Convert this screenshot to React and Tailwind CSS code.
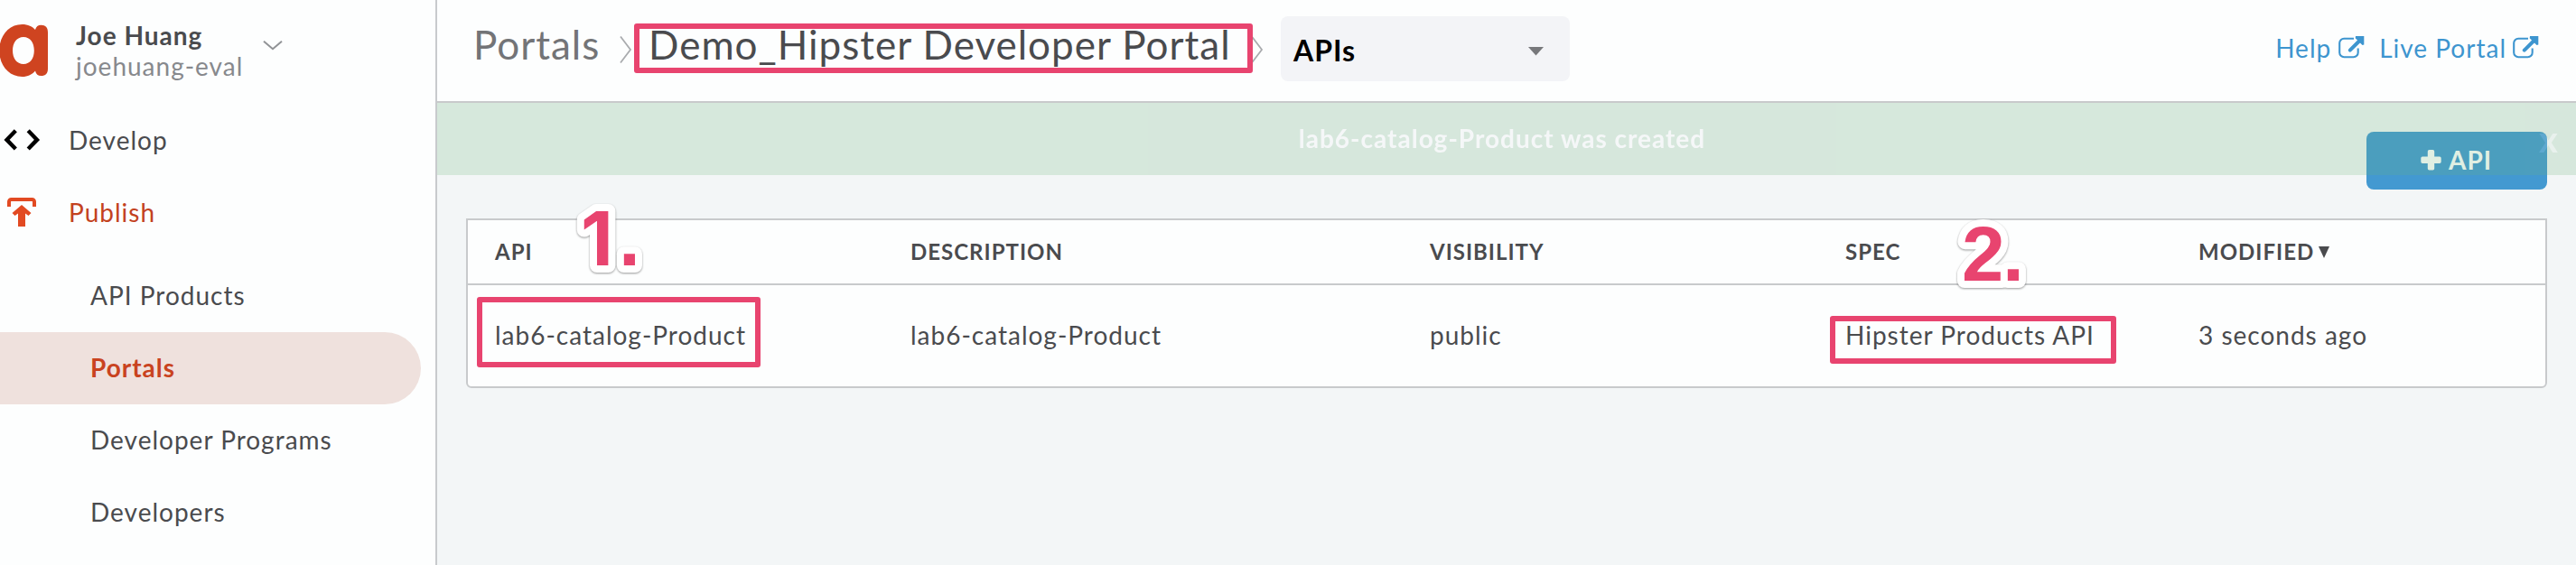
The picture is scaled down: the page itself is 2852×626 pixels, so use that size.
const SUB_ITEMS = ["API Products", "Portals", "Developer Programs", "Developers"];

const COLUMNS = ["API", "DESCRIPTION", "VISIBILITY", "SPEC", "MODIFIED"];
const ROW = ["lab6-catalog-Product", "lab6-catalog-Product", "public", "Hipster Products API", "3 seconds ago"];

function Logo() {
  return (
    <svg width="54" height="60" viewBox="0 0 54 60" className="shrink-0">
      <path
        fill="#cf4420"
        fillRule="evenodd"
        d="M24.500 1C31 1 36 3.500 39 7C40 3.500 42 1.800 45.500 1.800C50.500 1.800 53 4.500 53 10V50C53 55.500 50.500 58 45.500 58C42 58 40 56.300 39 52.500C35.500 56.500 31 59 24.500 59C9.500 59 -0.800 46 -0.800 30C-0.800 14 9.500 1 24.500 1ZM26 15C18.500 15 14 21.500 14 30C14 38.500 18.500 45 26 45C33.500 45 37.800 38.500 37.800 30C37.800 21.500 33.500 15 26 15Z"
      />
    </svg>
  );
}

function CodeIcon() {
  return (
    <svg width="48" height="26" viewBox="0 0 48 26" fill="none" stroke="#000" strokeWidth="4.400" className="shrink-0">
      <path d="M17.300 2.800L7.500 12.900L17.300 23" />
      <path d="M31.200 2.800L41 12.900L31.200 23" />
    </svg>
  );
}

function PublishIcon() {
  return (
    <svg width="48" height="32" viewBox="0 0 48 32" className="shrink-0">
      <path d="M10 10V4.500A2.500 2.500 0 0 1 12.500 2H35.500A2.500 2.500 0 0 1 38 4.500V10" fill="none" stroke="#e24a22" strokeWidth="4" />
      <path d="M24 8L34.500 17L31.500 20L28 17.500V32H20V17.500L16.500 20L13.500 17Z" fill="#e24a22" />
    </svg>
  );
}

function ExternalIcon() {
  return (
    <svg width="29" height="25" viewBox="0 0 29 25" className="shrink-0">
      <path d="M17 2.700H6.500A5 5 0 0 0 1.200 8V18A5 5 0 0 0 6.500 23.200H16.500A5 5 0 0 0 21.700 18V13.500" fill="none" stroke="#3d95cf" strokeWidth="2.100" />
      <path d="M12.800 15.700L23 5.500" stroke="#3d95cf" strokeWidth="4" strokeLinecap="round" />
      <path d="M19 0H28.300V9.600L26.500 10L18.700 2.200Z" fill="#3d95cf" />
    </svg>
  );
}

function Crumb() {
  return (
    <svg width="14" height="32" viewBox="0 0 14 32" fill="none" stroke="#a9abae" strokeWidth="1.800" className="shrink-0">
      <path d="M1 1.500L12 16L1 30.500" />
    </svg>
  );
}

const SANS = "'Liberation Sans', Arial, sans-serif";

function Marker({ digit, font, size, x, dotX }) {
  return (
    <svg width="120" height="126" viewBox="0 0 120 126" className="[filter:drop-shadow(0_1.5px_1px_rgba(0,0,0,0.4))]">
      <text y="94" fontWeight="700" letterSpacing="0" fill="#e8446f" stroke="#fff" strokeWidth="16" strokeLinejoin="round" paintOrder="stroke">
        <tspan x={x} fontFamily={font} fontSize={size}>
          {digit}
        </tspan>
        <tspan x={dotX} fontFamily={SANS} fontSize="86">
          .
        </tspan>
      </text>
    </svg>
  );
}

function Sidebar() {
  return (
    <aside className="flex w-[484px] shrink-0 flex-col border-r-2 border-[#c8cacd] bg-[#fdfefe]">
      <div className="flex h-[115px] items-start">
        <div className="pt-[26px]">
          <Logo />
        </div>
        <div className="w-[237px] whitespace-nowrap pl-[30px] pt-[22px] leading-[34px]">
          <div className="font-bold">Joe Huang</div>
          <div className="text-[#87898d]">joehuang-eval</div>
        </div>
        <svg width="22" height="12" viewBox="0 0 22 12" fill="none" stroke="#919396" strokeWidth="2" className="mt-[44px]">
          <path d="M1 1.800L11 10.300L21 1.800" />
        </svg>
      </div>
      <div className="flex h-20 items-center">
        <CodeIcon />
        <span className="pl-7">Develop</span>
      </div>
      <div className="flex h-20 items-center text-[#c3421f]">
        <PublishIcon />
        <span className="pl-7">Publish</span>
      </div>
      <nav className="mt-[13px]">
        {SUB_ITEMS.map((item) => (
          <div
            key={item}
            className={
              item === "Portals"
                ? "flex h-20 w-[466px] items-center rounded-r-full bg-[#efe1dd] pb-0.5 pl-[100px] font-bold text-[#c9431f]"
                : "flex h-20 items-center pb-0.5 pl-[100px]"
            }
          >
            {item}
          </div>
        ))}
      </nav>
    </aside>
  );
}

function Header() {
  return (
    <header className="flex h-[114px] items-start border-b-2 border-[#c8cacb] bg-[#fdfefe] pl-10 pr-[41px]">
      <div className="w-[162px] pt-[23px] text-[44px] leading-[52px] text-[#737477]">Portals</div>
      <div className="pt-[39px]">
        <Crumb />
      </div>
      <div className="relative w-[685px] pl-[18px] pt-[23px] text-[44px] leading-[52px]">
        Demo_Hipster Developer Portal
        <div className="absolute left-[2px] top-[26px] h-[55px] w-[685px] rounded-[3px] border-[6px] border-[#e8446f]" />
      </div>
      <div className="pt-[39px]">
        <Crumb />
      </div>
      <div className="ml-[19px] mt-[18px] flex h-[72px] w-[320px] items-center justify-between rounded-lg bg-[#f3f4f7] pl-[14px] pr-[29px] pt-[3px] text-[32px] font-bold leading-[39px] text-black">
        APIs
        <svg width="17" height="10" viewBox="0 0 17 10" className="mt-[2px]">
          <path d="M0 0H17L8.500 9.500Z" fill="#77787b" />
        </svg>
      </div>
      <div className="ml-auto flex items-start pt-9 leading-[34px] text-[#3d95cf]">
        <span className="pr-2">Help</span>
        <span className="pt-[4px]">
          <ExternalIcon />
        </span>
        <span className="pl-4 pr-[7px]">Live Portal</span>
        <span className="pt-[4px]">
          <ExternalIcon />
        </span>
      </div>
    </header>
  );
}

function Table() {
  return (
    <div className="relative mt-8 rounded-b-md border-2 border-[#c8cacc] bg-[#fdfefe]">
      <div className="grid h-[72px] grid-cols-[460px_575px_460px_391px_1fr] items-center border-b-2 border-[#c8cacc] pb-px pl-[30px] text-[24px] font-bold leading-[29px]">
        {COLUMNS.map((name) => (
          <div key={name} className="flex items-center">
            {name}
            {name === "MODIFIED" && (
              <svg width="12" height="13" viewBox="0 0 12 13" className="ml-[5px] mt-[2px]">
                <path d="M0 0H12L6 13Z" fill="#4a4b4e" />
              </svg>
            )}
          </div>
        ))}
      </div>
      <div className="grid h-28 grid-cols-[460px_575px_460px_391px_1fr] items-center pb-0.5 pl-[30px] leading-[34px]">
        {ROW.map((value, i) => (
          <div key={i}>{value}</div>
        ))}
      </div>
      <div className="absolute left-[10px] top-[85px] h-[78px] w-[314px] rounded-[3px] border-[6px] border-[#e8446f]" />
      <div className="absolute left-[1508px] top-[106px] h-[53px] w-[317px] rounded-[3px] border-[6px] border-[#e8446f]" />
      <div className="absolute left-[102px] top-[-44px]">
        <Marker digit="1" font="Inter, sans-serif" size="83" x="23" dotX="65" />
      </div>
      <div className="absolute left-[1632px] top-[-27px]">
        <Marker digit="2" font={SANS} size="86" x="22" dotX="67" />
      </div>
    </div>
  );
}

export default function App() {
  return (
    <div className="flex h-[626px] w-[2852px] overflow-hidden bg-[#f3f6f7] font-['Lato',sans-serif] text-[28px] leading-[34px] tracking-[1px] text-[#4a4b4e]">
      <Sidebar />
      <div className="flex grow flex-col">
        <Header />
        <main className="relative grow px-8 pt-8">
          <button className="ml-auto flex h-16 w-[200px] items-center rounded-lg bg-[#4399d1] pb-0.5 pl-[60px] font-bold text-white">
            <svg width="23" height="23" viewBox="0 0 23 23" className="mr-2">
              <path
                fill="#fff"
                d="M9.500 0H13.500Q15.200 0 15.200 1.700V7.500H21Q22.700 7.500 22.700 9.200V13.200Q22.700 14.900 21 14.900H15.200V20.800Q15.200 22.500 13.500 22.500H9.500Q7.800 22.500 7.800 20.800V14.900H2Q0.300 14.900 0.300 13.200V9.200Q0.300 7.500 2 7.500H7.800V1.700Q7.800 0 9.500 0Z"
              />
            </svg>
            API
          </button>
          <Table />
          <div className="absolute inset-x-0 top-0 flex h-20 items-start justify-center bg-[#6eb37c] pt-[22px] font-bold text-white opacity-[0.21]">
            <span className="pr-[10px]">lab6-catalog-Product was created</span>
            <span className="absolute right-[19px] top-[16px] text-[40px] leading-[48px] text-white/60">x</span>
          </div>
        </main>
      </div>
    </div>
  );
}
